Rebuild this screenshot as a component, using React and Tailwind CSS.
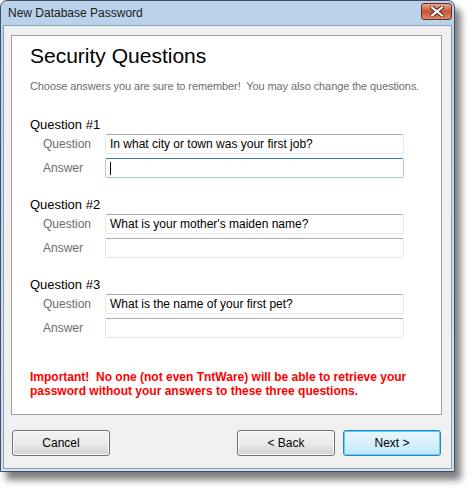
const questions = [
  { n: 1, q: "In what city or town was your first job?", focused: true },
  { n: 2, q: "What is your mother's maiden name?" },
  { n: 3, q: "What is the name of your first pet?" },
];

function Field({ value, focused }) {
  return (
    <div
      className={`w-[299px] h-[20px] flex items-center px-[4px] text-[12px] text-black bg-white rounded-[2px] border ${
        focused
          ? "border-[#a4c9e3] border-t-[#3d7bad]"
          : "border-[#e3e9ef] border-t-[#abadb3]"
      }`}
    >
      {value}
      {focused && <span className="w-px h-[13px] bg-black" />}
    </div>
  );
}

function Button({ label, primary }) {
  return (
    <div
      className={`w-[98px] h-[26px] flex items-center justify-center text-[12px] text-black rounded-[3px] border ${
        primary
          ? "border-[#3c7fb1] bg-gradient-to-b from-[#eaf6fd] via-[#d9f0fc] to-[#bee6fd] shadow-[inset_0_0_0_1px_#48d7fe]"
          : "border-[#707070] bg-gradient-to-b from-[#f2f2f2] via-[#ebebeb] to-[#cfcfcf] shadow-[inset_0_0_0_1px_#fcfcfc]"
      }`}
    >
      {label}
    </div>
  );
}

export default function App() {
  return (
    <div className="w-[473px] h-[490px] bg-white overflow-hidden font-['Liberation_Sans',Arial,sans-serif]">
      <div className="w-[455px] h-[472px] rounded-t-[7px] border border-[#3f4f61] bg-gradient-to-b from-[#b9d1ea] to-[#d3e2f1] shadow-[6px_8px_7px_rgba(0,0,0,0.5)] flex flex-col px-[2px] pb-[2px]">
        <div className="h-[24px] flex items-center justify-between pl-[5px]">
          <span className="text-[12px] text-[#1a1a1a]">New Database Password</span>
          <div className="w-[31px] h-[17px] -mt-[3px] rounded-[3px] border border-[#6a2a1e] bg-gradient-to-b from-[#e9a790] via-[#c75535] to-[#d98a6c] flex items-center justify-center">
            <svg width="14" height="11" viewBox="0 0 14 11">
              <path d="M2 1.5 L12 9.5 M12 1.5 L2 9.5" stroke="#4a1d14" strokeWidth="4" strokeLinecap="square" />
              <path d="M2 1.5 L12 9.5 M12 1.5 L2 9.5" stroke="#ffffff" strokeWidth="2.2" strokeLinecap="square" />
            </svg>
          </div>
        </div>
        <div className="flex-1 bg-[#f0f0f0] border border-[#8aa0b8] flex flex-col">
          <div className="ml-[7px] mt-[9px] w-[431px] h-[380px] bg-white border border-[#a0a0a0] flex flex-col pl-[18px]">
            <div className="mt-[5px] h-[30px] flex items-center text-[21px] text-black">
              Security Questions
            </div>
            <div className="mt-[7px] h-[16px] flex items-center whitespace-nowrap text-[11px] tracking-[-0.1px] text-[#6d6d6d]">
              Choose answers you are sure to remember!&nbsp; You may also change the questions.
            </div>
            <div className="mt-[22px] flex flex-col gap-[18px]">
              {questions.map((item) => (
                <div key={item.n} className="flex flex-col">
                  <div className="h-[18px] flex items-center text-[13px] text-black">
                    Question #{item.n}
                  </div>
                  <div className="flex items-center pl-[13px]">
                    <span className="w-[62px] text-[12px] text-[#6d6d6d]">Question</span>
                    <Field value={item.q} />
                  </div>
                  <div className="mt-[4px] flex items-center pl-[13px]">
                    <span className="w-[62px] text-[12px] text-[#6d6d6d]">Answer</span>
                    <Field focused={item.focused} />
                  </div>
                </div>
              ))}
            </div>
            <div className="mt-[32px] text-[12px] leading-[14px] font-bold text-[#ff0000]">
              Important!&nbsp; No one (not even TntWare) will be able to retrieve your
              <br />
              password without your answers to these three questions.
            </div>
          </div>
          <div className="mt-[15px] flex items-center pl-[8px] pr-[10px]">
            <Button label="Cancel" />
            <div className="ml-auto flex gap-[8px]">
              <Button label="< Back" />
              <Button label="Next >" primary />
            </div>
          </div>
        </div>
      </div>
    </div>
  );
}
